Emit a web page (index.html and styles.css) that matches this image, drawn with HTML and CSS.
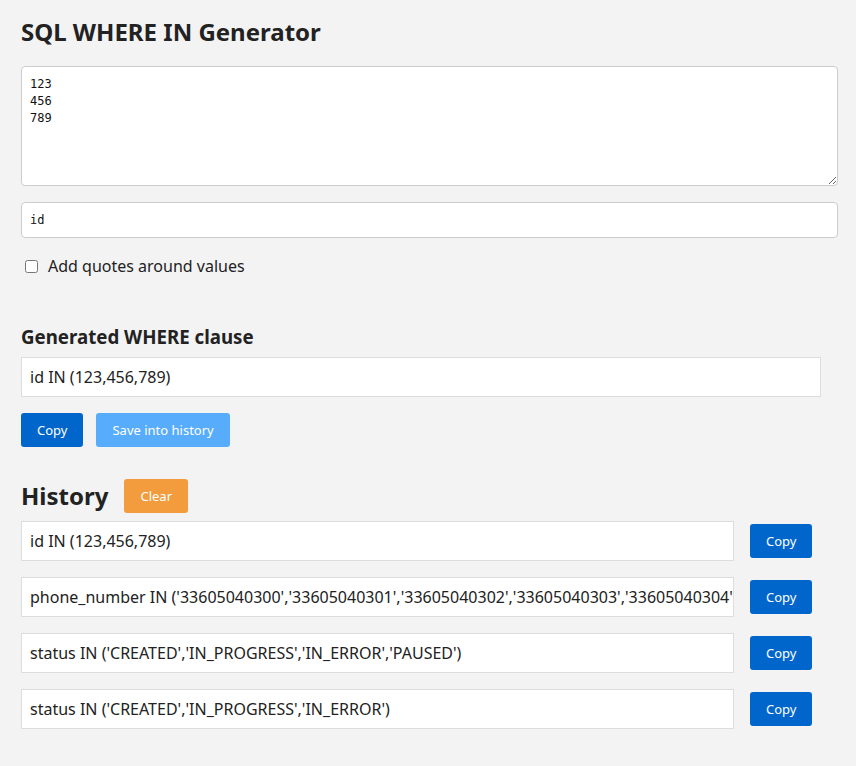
FILE: index.html
```html
<!DOCTYPE html>
<html>
<head>
<meta charset="utf-8">
<link rel="stylesheet" href="styles.css">
</head>
<body>
<main class="page">
  <h1 class="title">SQL WHERE IN Generator</h1>
  <textarea class="values">123
456
789</textarea>
  <input class="column" type="text" value="id">
  <label class="check"><input type="checkbox" class="check-box"><span>Add quotes around values</span></label>

  <h2 class="subtitle">Generated WHERE clause</h2>
  <div class="result">id IN (123,456,789)</div>
  <div class="actions">
    <button class="btn btn-primary">Copy</button>
    <button class="btn btn-light">Save into history</button>
  </div>

  <div class="history-head">
    <h2 class="history-title">History</h2>
    <button class="btn btn-orange">Clear</button>
  </div>
  <div class="history">
    <div class="row"><div class="row-text">id IN (123,456,789)</div><button class="btn btn-primary">Copy</button></div>
    <div class="row"><div class="row-text">phone_number IN ('33605040300','33605040301','33605040302','33605040303','33605040304','33605040305')</div><button class="btn btn-primary">Copy</button></div>
    <div class="row"><div class="row-text">status IN ('CREATED','IN_PROGRESS','IN_ERROR','PAUSED')</div><button class="btn btn-primary">Copy</button></div>
    <div class="row"><div class="row-text">status IN ('CREATED','IN_PROGRESS','IN_ERROR')</div><button class="btn btn-primary">Copy</button></div>
  </div>
</main>
</body>
</html>
```
FILE: styles.css
```css
html, body {
  margin: 0;
  padding: 0;
  background: #f3f3f3;
}
body {
  font-family: "Noto Sans", "Open Sans", sans-serif;
  color: #222;
}
.page {
  padding: 14px 18px 20px 21px;
  display: flex;
  flex-direction: column;
}
.title {
  font-size: 24px;
  font-weight: 700;
  margin: 0 0 16px;
  line-height: 36px;
}
.values {
  box-sizing: border-box;
  width: 100%;
  height: 120px;
  border: 1px solid #ccc;
  border-radius: 4px;
  background: #fff;
  font-family: "DejaVu Sans Mono", monospace;
  font-size: 12px;
  line-height: 17px;
  padding: 9px 8px;
  margin: 0;
  color: #111;
  resize: vertical;
}
.column {
  box-sizing: border-box;
  width: 100%;
  height: 36px;
  margin: 16px 0 0;
  border: 1px solid #ccc;
  border-radius: 4px;
  background: #fff;
  font-family: "DejaVu Sans Mono", monospace;
  font-size: 12px;
  padding: 0 8px;
  color: #111;
}
.check {
  display: flex;
  align-items: center;
  gap: 10px;
  margin: 14px 0 0 4px;
  font-size: 16px;
  line-height: 28px;
}
.check-box {
  margin: 0;
  width: 13px;
  height: 13px;
}
.subtitle {
  font-size: 18.7px;
  font-weight: 700;
  margin: 43px 0 6px;
  line-height: 28px;
}
.result {
  box-sizing: border-box;
  width: 800px;
  height: 40px;
  background: #fff;
  border: 1px solid #ddd;
  padding: 0 8px;
  font-size: 16px;
  line-height: 38px;
  white-space: nowrap;
  overflow: hidden;
}
.actions {
  display: flex;
  gap: 13px;
  margin-top: 16px;
}
.btn {
  font-family: "Noto Sans", "Open Sans", sans-serif;
  font-size: 13px;
  color: #fff;
  border: none;
  border-radius: 3px;
  height: 34px;
  padding: 0 16px;
  cursor: pointer;
  flex: none;
}
.btn-primary { background: #0066cc; }
.btn-light { background: #57adfb; }
.btn-orange { background: #f39c3d; }
.history-head {
  display: flex;
  align-items: center;
  gap: 16px;
  margin-top: 31px;
}
.history-title {
  font-size: 24px;
  font-weight: 700;
  margin: 0;
  line-height: 36px;
}
.history {
  display: flex;
  flex-direction: column;
  gap: 16px;
  margin-top: 7px;
}
.row {
  display: flex;
  align-items: center;
  gap: 16px;
}
.row-text {
  box-sizing: border-box;
  width: 713px;
  height: 40px;
  background: #fff;
  border: 1px solid #ddd;
  padding: 0 8px;
  font-size: 16px;
  line-height: 38px;
  white-space: nowrap;
  overflow: hidden;
  text-overflow: clip;
  flex: none;
}
```
